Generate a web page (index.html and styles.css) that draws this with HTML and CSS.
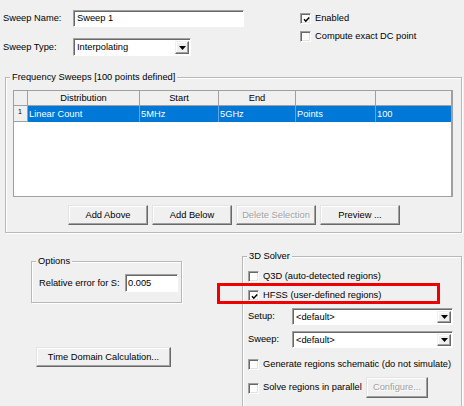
FILE: index.html
```html
<!DOCTYPE html>
<html>
<head>
<meta charset="utf-8">
<title>Sweep</title>
<link rel="stylesheet" href="styles.css">
</head>
<body>
<div class="page">
  <div class="top">
    <div class="top-left">
      <div class="row">
        <span class="lbl">Sweep Name:</span>
        <div class="textbox name">Sweep 1</div>
      </div>
      <div class="row row-type">
        <span class="lbl">Sweep Type:</span>
        <div class="combo type">
          <span class="combo-text">Interpolating</span>
          <span class="combo-btn"><svg width="7" height="4" viewBox="0 0 7 4"><path d="M0 0H7L3.5 4Z" fill="#000"/></svg></span>
        </div>
      </div>
    </div>
    <div class="top-right">
      <div class="check"><span class="box"><svg width="7" height="7" viewBox="0 0 7 7"><path d="M1 3.3L2.8 5.2L6.2 1.6" fill="none" stroke="#000" stroke-width="1.5"/></svg></span><span>Enabled</span></div>
      <div class="check"><span class="box"></span><span>Compute exact DC point</span></div>
    </div>
  </div>

  <div class="group freq">
    <span class="legend">Frequency Sweeps [100 points defined]</span>
    <div class="grid">
      <div class="grid-row head">
        <div class="cell c0"></div>
        <div class="cell c1">Distribution</div>
        <div class="cell c2">Start</div>
        <div class="cell c3">End</div>
        <div class="cell c4"></div>
        <div class="cell c5"></div>
      </div>
      <div class="grid-row sel">
        <div class="cell c0">1</div>
        <div class="cell c1">Linear Count</div>
        <div class="cell c2">5MHz</div>
        <div class="cell c3">5GHz</div>
        <div class="cell c4">Points</div>
        <div class="cell c5">100</div>
      </div>
    </div>
    <div class="btn-row">
      <div class="btn">Add Above</div>
      <div class="btn">Add Below</div>
      <div class="btn disabled">Delete Selection</div>
      <div class="btn">Preview ...</div>
    </div>
  </div>

  <div class="bottom">
    <div class="bottom-left">
      <div class="group options">
        <span class="legend">Options</span>
        <div class="opt-row">
          <span class="opt-lbl">Relative error for S:</span>
          <div class="textbox val">0.005</div>
        </div>
      </div>
      <div class="btn time">Time Domain Calculation...</div>
    </div>
    <div class="group solver">
      <span class="legend">3D Solver</span>
      <div class="check"><span class="box"></span><span>Q3D (auto-detected regions)</span></div>
      <div class="check hfss"><span class="box"><svg width="7" height="7" viewBox="0 0 7 7"><path d="M1 3.3L2.8 5.2L6.2 1.6" fill="none" stroke="#000" stroke-width="1.5"/></svg></span><span>HFSS (user-defined regions)</span></div>
      <div class="row setup-row">
        <span class="s-lbl">Setup:</span>
        <div class="combo wide">
          <span class="combo-text">&lt;default&gt;</span>
          <span class="combo-btn"><svg width="7" height="4" viewBox="0 0 7 4"><path d="M0 0H7L3.5 4Z" fill="#000"/></svg></span>
        </div>
      </div>
      <div class="row sweep-row">
        <span class="s-lbl">Sweep:</span>
        <div class="combo wide">
          <span class="combo-text">&lt;default&gt;</span>
          <span class="combo-btn"><svg width="7" height="4" viewBox="0 0 7 4"><path d="M0 0H7L3.5 4Z" fill="#000"/></svg></span>
        </div>
      </div>
      <div class="check gen"><span class="box"></span><span>Generate regions schematic (do not simulate)</span></div>
      <div class="row solve-row">
        <span class="box"></span><span class="solve-text">Solve regions in parallel</span>
        <div class="btn disabled conf">Configure...</div>
      </div>
    </div>
  </div>

  <div class="highlight"></div>
</div>
</body>
</html>
```

FILE: styles.css
```css
* { box-sizing: border-box; }
html, body { margin: 0; padding: 0; }
body {
  background: #f0f0f0;
  font-family: "Liberation Sans", Arial, sans-serif;
  font-size: 9.3px;
  line-height: 11px;
  color: #000;
}
.page { position: relative; width: 464px; height: 406px; overflow: hidden; }

.top { display: flex; height: 77px; }
.top-left { width: 300px; padding: 10px 0 0 3px; flex: none; }
.row { display: flex; align-items: center; }
.lbl { width: 70px; flex: none; }
.row-type { margin-top: 11px; }

.textbox {
  background: #fff;
  border: 1px solid;
  border-color: #a0a0a0 #fff #fff #a0a0a0;
  box-shadow: inset 1px 1px 0 #696969;
  padding-left: 3px;
  display: flex;
  align-items: center;
}
.name { width: 171px; height: 17px; }

.combo {
  display: flex;
  background: #fff;
  border: 1px solid;
  border-color: #a0a0a0 #fff #fff #a0a0a0;
  box-shadow: inset 1px 1px 0 #696969;
  padding: 2px 1px 1px 3px;
}
.combo-text { flex: 1; display: flex; align-items: center; white-space: nowrap; }
.combo-btn {
  width: 14px;
  background: #f0f0f0;
  border: 1px solid;
  border-color: #f0f0f0 #696969 #696969 #f0f0f0;
  box-shadow: inset -1px -1px 0 #a0a0a0, inset 1px 1px 0 #fff;
  display: flex;
  align-items: center;
  justify-content: center;
}
.type { width: 118px; height: 18px; }

.top-right { padding-top: 13px; display: flex; flex-direction: column; gap: 7px; }
.check { display: flex; align-items: center; height: 11px; white-space: nowrap; }
.box {
  width: 11px;
  height: 11px;
  flex: none;
  background: #fff;
  border: 1px solid;
  border-color: #a0a0a0 #fff #fff #a0a0a0;
  box-shadow: inset 1px 1px 0 #696969, inset -1px -1px 0 #e3e3e3;
  margin-right: 4px;
  display: flex;
  align-items: center;
  justify-content: center;
}
.box svg { margin: 1px 0 0 1px; }

.group {
  position: relative;
  border: 1px solid #b8b8b8;
  box-shadow: inset 1px 1px 0 #fff, 1px 1px 0 #fff;
}
.legend {
  position: absolute;
  top: -6px;
  left: 4px;
  padding: 0 2px;
  background: #f0f0f0;
  line-height: 11px;
  white-space: nowrap;
}
.freq { margin-left: 5px; width: 457px; height: 156px; }

.grid {
  margin: 12px 0 0 7px;
  width: 440px;
  height: 107px;
  background: #fff;
  border: 1px solid #a0a0a0;
  border-right: 2px solid #a0a0a0;
}
.grid-row { display: flex; }
.cell {
  flex: none;
  border-right: 1px solid #a0a0a0;
  display: flex;
  align-items: center;
  white-space: nowrap;
  overflow: hidden;
}
.c0 { width: 14px; }
.c1 { width: 112px; }
.c2 { width: 79px; }
.c3 { width: 77px; }
.c4 { width: 80px; }
.c5 { width: 75px; border-right: none; }
.head { height: 15px; border-bottom: 1px solid #a0a0a0; }
.head .cell { background: #f0f0f0; justify-content: center; }
.sel { height: 16px; }
.sel .cell {
  background: #0078d7;
  color: #fff;
  border-right-color: #5ea6e8;
  padding-left: 1px;
}
.sel .c0 {
  background: #f0f0f0;
  color: #000;
  border-right-color: #a0a0a0;
  border-bottom: 1px solid #a0a0a0;
  font-size: 7px;
  line-height: 8px;
  align-items: flex-start;
  padding: 2px 0 0 4px;
}

.btn-row { display: flex; gap: 4px; margin: 8px 0 0 62px; }
.btn {
  width: 80px;
  height: 20px;
  flex: none;
  display: flex;
  align-items: center;
  justify-content: center;
  background: #f0f0f0;
  border: 1px solid;
  border-color: #e3e3e3 #696969 #696969 #e3e3e3;
  box-shadow: inset -1px -1px 0 #a0a0a0, inset 1px 1px 0 #fff;
  white-space: nowrap;
}
.btn.disabled { color: #a0a0a0; text-shadow: 1px 1px 0 #fff; }

.bottom { display: flex; }
.bottom-left { width: 242px; flex: none; }
.options { margin: 28px 0 0 31px; width: 151px; height: 42px; }
.opt-row { display: flex; align-items: center; margin: 12px 0 0 7px; }
.opt-lbl { width: 86px; flex: none; white-space: nowrap; }
.val { width: 53px; height: 18px; padding-left: 2px; }
.time { width: 135px; margin: 44px 0 0 36px; }

.solver {
  margin-top: 23px;
  width: 220px;
  height: 170px;
  flex: none;
  padding: 14px 0 0 5px;
  display: flex;
  flex-direction: column;
}
.hfss { margin-top: 8px; }
.s-lbl { width: 44px; flex: none; }
.wide { width: 161px; height: 17px; }
.setup-row { margin-top: 7px; }
.sweep-row { margin-top: 6px; }
.gen { margin-top: 11px; }
.solve-row { margin-top: 7px; height: 21px; }
.solve-row .box { margin-top: 2px; }
.solve-text { width: 103px; flex: none; white-space: nowrap; }
.conf { width: 62px; height: 21px; }

.highlight {
  position: absolute;
  left: 217px;
  top: 283px;
  width: 223px;
  height: 21px;
  border: 3px solid #ee0000;
}
```
